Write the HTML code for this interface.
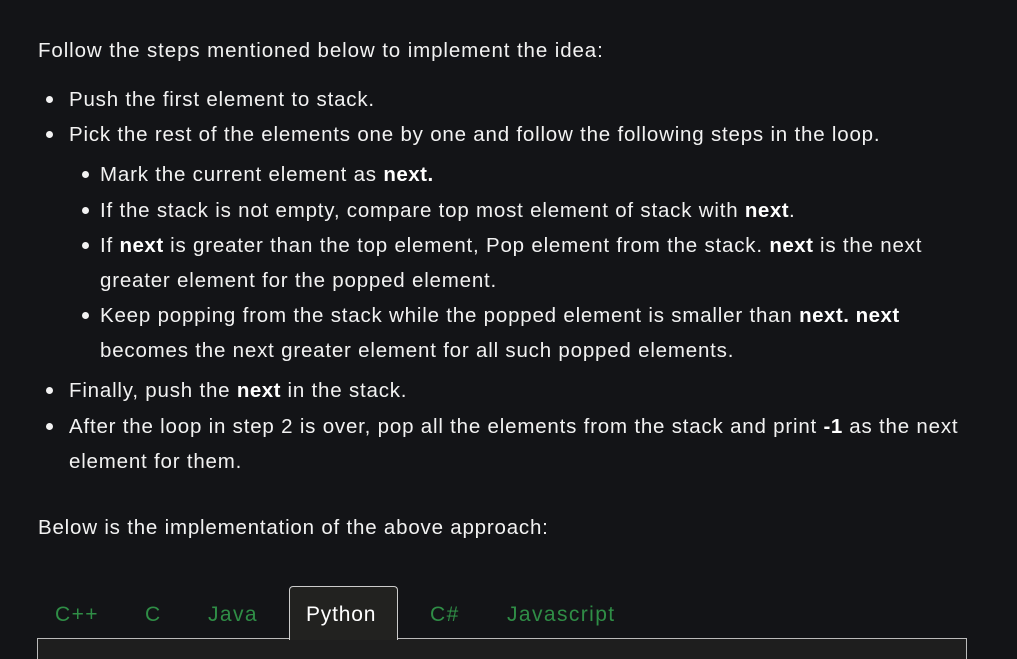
<!DOCTYPE html>
<html><head><style>
body{margin:0;width:1017px;height:653px;background:#131417;overflow:hidden;font-family:"Liberation Sans",sans-serif;color:#f2f2f2;position:relative}
.l{position:absolute;font-size:20.5px;letter-spacing:0.8px;line-height:24px;white-space:nowrap;transform:translateY(-50%);margin-top:1px}
.b{position:absolute;width:7px;height:7px;border-radius:50%;background:#f2f2f2}
b{font-weight:bold;color:#fff;letter-spacing:0.5px}
.t{position:absolute;top:615px;transform:translateY(-50%);font-size:21px;letter-spacing:1.4px;color:#2f8d46}
</style></head><body>
<div class="l" style="left:38px;top:50px;letter-spacing:0.9px">Follow the steps mentioned below to implement the idea:</div>
<div class="b" style="left:46px;top:96px"></div><div class="l" style="left:69px;top:99px">Push the first element to stack.</div>
<div class="b" style="left:46px;top:131px"></div><div class="l" style="left:69px;top:134px">Pick the rest of the elements one by one and follow the following steps in the loop.</div>
<div class="b" style="left:82px;top:171px"></div><div class="l" style="left:100px;top:174px">Mark the current element as <b>next.</b></div>
<div class="b" style="left:82px;top:207px"></div><div class="l" style="left:100px;top:210px">If the stack is not empty, compare top most element of stack with <b>next</b>.</div>
<div class="b" style="left:82px;top:242px"></div><div class="l" style="left:100px;top:245px">If <b>next</b> is greater than the top element, Pop element from the stack. <b>next</b> is the next</div>
<div class="l" style="left:100px;top:280px">greater element for the popped element.</div>
<div class="b" style="left:82px;top:312px"></div><div class="l" style="left:100px;top:315px">Keep popping from the stack while the popped element is smaller than <b>next. next</b></div>
<div class="l" style="left:100px;top:350px">becomes the next greater element for all such popped elements.</div>
<div class="b" style="left:46px;top:387px"></div><div class="l" style="left:69px;top:390px">Finally, push the <b>next</b> in the stack.</div>
<div class="b" style="left:46px;top:423px"></div><div class="l" style="left:69px;top:426px">After the loop in step 2 is over, pop all the elements from the stack and print <b>-1</b> as the next</div>
<div class="l" style="left:69px;top:461px">element for them.</div>
<div class="l" style="left:38px;top:527px">Below is the implementation of the above approach:</div>
<div style="position:absolute;left:37px;top:638px;width:928px;height:20px;border:1px solid #bbb;border-bottom:none;background:#1e1e1e"></div>
<div style="position:absolute;left:289px;top:586px;width:107px;height:53px;border:1px solid #ccc;border-bottom:none;border-radius:4px 4px 0 0;background:#222220"></div>
<div class="t" style="left:55px">C++</div>
<div class="t" style="left:145px">C</div>
<div class="t" style="left:208px">Java</div>
<div class="t" style="left:306px;color:#fff;letter-spacing:0.8px">Python</div>
<div class="t" style="left:430px">C#</div>
<div class="t" style="left:507px">Javascript</div>
</body></html>
